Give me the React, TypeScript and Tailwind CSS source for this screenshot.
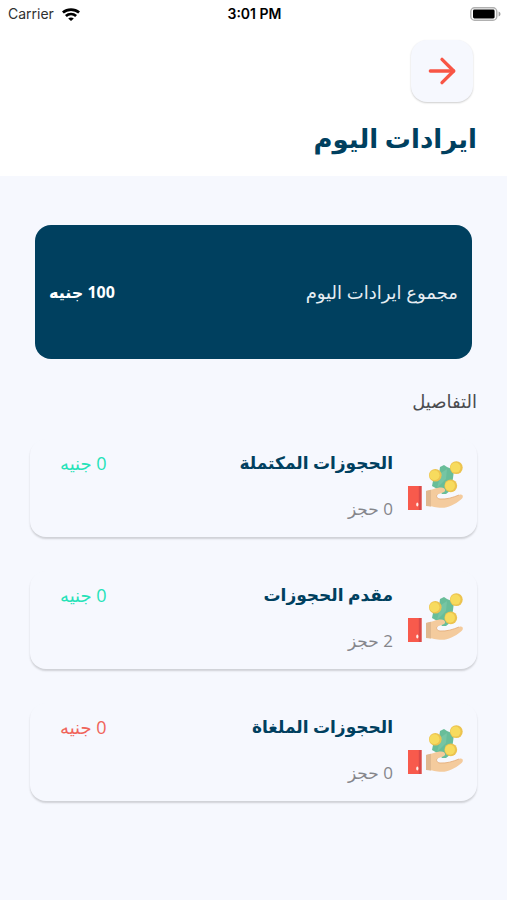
import { ArrowRight } from "lucide-react";

type Booking = {
  title: string;
  count: number;
  amount: number;
  cancelled?: boolean;
};

const bookings: Booking[] = [
  { title: "الحجوزات المكتملة", count: 0, amount: 0 },
  { title: "مقدم الحجوزات", count: 2, amount: 0 },
  { title: "الحجوزات الملغاة", count: 0, amount: 0, cancelled: true },
];

function WifiIcon() {
  return (
    <svg viewBox="0 0 18 13" className="h-[13px] w-[18px]" fill="none" stroke="black" strokeWidth="2.7" aria-hidden="true">
      <path d="M.9 4.6C5.500.6 12.500.6 17.100 4.600" />
      <path d="M3.900 8c2.900-2.700 7.300-2.700 10.200 0" />
      <path d="M9 13 6.200 10.500c1.600-1.500 4-1.500 5.600 0z" fill="black" stroke="none" />
    </svg>
  );
}

function BatteryIcon() {
  return (
    <svg viewBox="0 0 31 14" className="h-3.5 w-[31px]" aria-hidden="true">
      <rect x="0.8" y="0.8" width="26" height="12.4" rx="3.8" fill="white" stroke="#b0b0b0" strokeWidth="1.4" />
      <rect x="3" y="2.6" width="21.6" height="8.8" rx="1.4" fill="black" />
      <path d="M28.600 4.600c2.500.9 2.500 3.900 0 4.800z" fill="#a0a0a0" />
    </svg>
  );
}

function MoneyHandIcon() {
  return (
    <svg viewBox="0 0 56 52" className="h-[52px] w-14 shrink-0" aria-hidden="true">
      <path d="M32 6 36 4 39 6 46 9 45 17 43 29 38 33 34 33 31 29 24 25 25 20 31 13z" fill="#68bd99" />
      <path d="m33 12 6-4-1 10-9 9z" fill="#76c5a3" />
      <path
        d="M18 30C24 29 28 26.500 33 26.500C37.500 26.500 38.500 30.500 35 31.500L29.500 33.500C27.500 35 29 37.800 32 38C38.500 38.500 45 36.500 51 34C54.500 32.500 56.500 35.500 53 38.500C47 43.500 40 46.800 34 46.800C27.500 46.800 25 45 18 45z"
        fill="#f4cb9d"
      />
      <path d="M18 30l5-1.200v16.700l-5-.5z" fill="#dfb990" />
      <path d="M29.500 33.500C27.500 35 29 37.800 32 38C38.500 38.500 45 36.500 51 34" fill="none" stroke="#e5af7c" strokeWidth="0.9" />
      <rect x="0" y="25" width="13.500" height="24" fill="#f85a4c" />
      <path d="M10.800 25h2.700v24h-2.700z" fill="#d94a49" />
      <ellipse cx="9.300" cy="43.500" rx="1.100" ry="2" fill="#fff0e9" />
      <g fill="#ecc34f">
        <circle cx="48.300" cy="6.600" r="6.400" />
        <circle cx="27.300" cy="14.300" r="6.300" />
        <circle cx="42.800" cy="24.800" r="6.400" />
      </g>
      <g fill="#f7db5e">
        <circle cx="47.500" cy="6.600" r="5" />
        <circle cx="26.500" cy="14.300" r="5" />
        <circle cx="42" cy="24.800" r="5" />
      </g>
    </svg>
  );
}

function BookingCard({ title, count, amount, cancelled }: Booking) {
  return (
    <li className="flex h-[98px] items-start rounded-2xl bg-[#f6f8fe] px-[13px] shadow-[0_2px_2px_rgba(0,0,0,0.16)]">
      <div className="pt-[22px]">
        <MoneyHandIcon />
      </div>
      <div className="flex-1 pt-2.5 pr-[15px]">
        <h3 className="text-[17px] leading-7 font-bold text-[#00405f]">{title}</h3>
        <p className="mt-[18px] text-[17px] leading-7 text-[#85868b]">{count} حجز</p>
      </div>
      <p className={`pt-2.5 pl-[17px] text-lg leading-7 ${cancelled ? "text-[#f0645a]" : "text-[#25e2b8]"}`}>
        {amount} جنيه
      </p>
    </li>
  );
}

export default function App() {
  return (
    <div
      dir="rtl"
      className="min-h-screen bg-[#f6f8fe] font-['Open_Sans','DejaVu_Sans',sans-serif]"
    >
      <header className="bg-white pb-[18px]">
        <div dir="ltr" className="grid h-7 grid-cols-3 items-center pr-1.5 pl-2 font-['Inter',sans-serif] text-sm text-[#303030]">
          <div className="flex items-center gap-2">
            <span>Carrier</span>
            <WifiIcon />
          </div>
          <time className="text-center font-semibold text-black">3:01 PM</time>
          <div className="flex justify-end">
            <BatteryIcon />
          </div>
        </div>
        <div className="px-[30px] pt-3">
          <button
            type="button"
            aria-label="رجوع"
            className="mr-1 flex size-[62px] items-center justify-center rounded-2xl bg-[#f6f8fe] shadow-[0_1px_2px_rgba(0,0,0,0.2)]"
          >
            <ArrowRight className="size-10 text-[#f85545]" strokeWidth={2} />
          </button>
          <h1 className="mt-4 text-[26px] leading-10 font-bold text-[#00405f]">ايرادات اليوم</h1>
        </div>
      </header>

      <main className="px-[30px] pt-[49px] pb-8">
        <section className="mx-[5px] flex h-[134px] items-center justify-between rounded-2xl bg-[#00405f] px-3.5 text-white">
          <h2 className="text-lg text-[#e6edf2]">مجموع ايرادات اليوم</h2>
          <p className="text-base font-bold">100 جنيه</p>
        </section>

        <h2 className="mt-7 text-lg leading-7 text-[#4b4c50]">التفاصيل</h2>
        <ul className="mt-6 space-y-[34px]">
          {bookings.map((booking) => (
            <BookingCard key={booking.title} {...booking} />
          ))}
        </ul>
      </main>
    </div>
  );
}
